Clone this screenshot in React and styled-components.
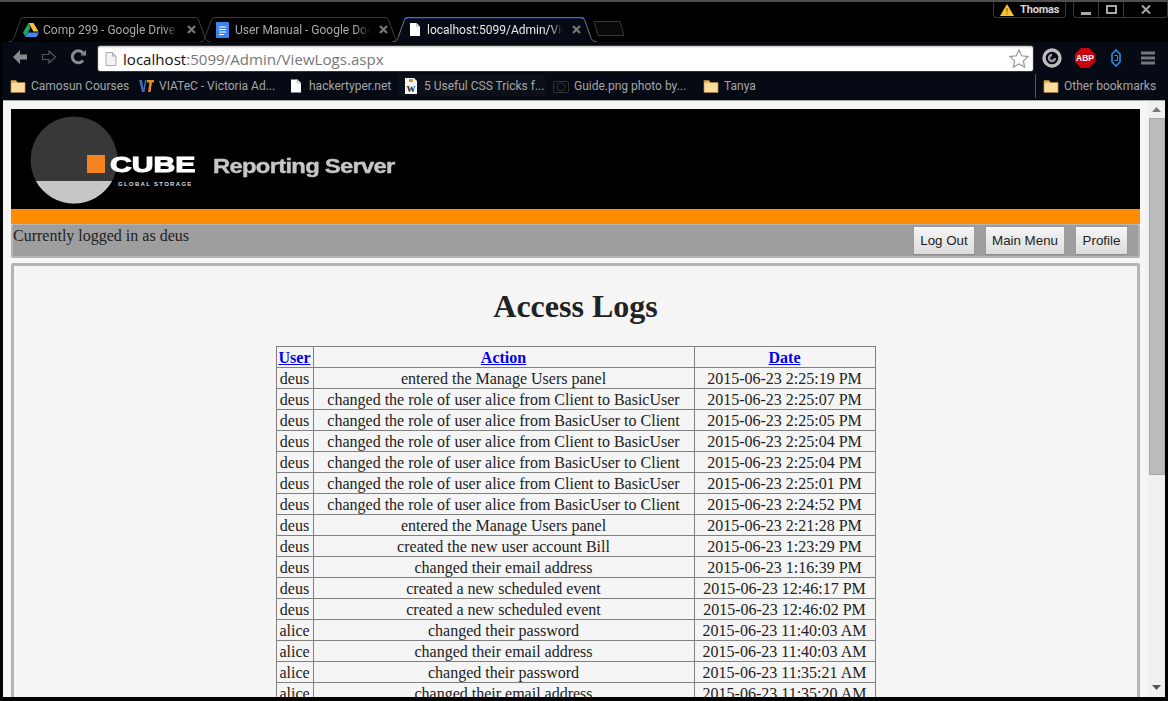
import React from "react";
import styled, { createGlobalStyle } from "styled-components";

const Global = createGlobalStyle`
  html, body { margin: 0; padding: 0; height: 100%; background: #000; overflow: hidden; }
  #root { height: 100%; }
`;

const UI = `Roboto, "Open Sans", sans-serif`;

const Window = styled.div`
  width: 1168px; height: 701px; background: #000; display: flex; flex-direction: column;
  border-top: 2px solid #4e4e4e; box-sizing: border-box; overflow: hidden;
`;
const TitleBar = styled.div`
  height: 40px; display: flex; justify-content: space-between; align-items: flex-start; flex: none;
`;
const TabStrip = styled.div`
  display: flex; align-items: flex-end; height: 40px; padding-left: 8px;
`;
const TabShell = styled.div`
  position: relative; width: ${p => p.$w}px; margin-right: ${p => p.$mr || 0}px; height: 25px; flex: none;
  display: flex; align-items: center; padding: 0 0 0 ${p => p.$pl}px; box-sizing: border-box;
  font: 12px ${UI}; color: ${p => p.$active ? "#e8e8e8" : "#a9a9a9"};
`;
const TabOutline = styled.svg`
  position: absolute; left: 0; top: 0;
`;
const TabLabel = styled.span`
  position: relative; margin-left: ${p => p.$ml}px; width: ${p => p.$w}px; flex: none; white-space: nowrap; overflow: hidden;
  -webkit-mask-image: linear-gradient(to right, #000 90%, transparent);
  mask-image: linear-gradient(to right, #000 90%, transparent);
`;
const TabClose = styled.svg`
  position: relative; margin-left: 9px; flex: none;
`;
const TabIcon = styled.svg`position: relative; flex: none;`;
const NewTab = styled.svg`flex: none; margin: 0 0 6px 5px;`;

const TitleRight = styled.div`
  display: flex; align-items: flex-start;
`;
const Profile = styled.div`
  height: 16px; width: 73px; border: 1px solid #3a3a3a; border-top: none; border-radius: 0 0 4px 4px;
  display: flex; align-items: center; gap: 6px; padding-left: 6px; box-sizing: border-box;
  font: bold 11px ${UI}; letter-spacing: -0.15px; color: #d8d8d8;
`;
const WinControls = styled.div`
  height: 16px; margin-left: 7px; border: 1px solid #3a3a3a; border-top: none; border-radius: 0 0 4px 4px;
  display: flex; box-sizing: border-box;
`;
const WinBtn = styled.div`
  width: ${p => p.$w}px; height: 100%; display: flex; align-items: center; justify-content: center;
  border-right: ${p => p.$last ? "none" : "1px solid #3a3a3a"}; box-sizing: border-box; color: #bbb;
`;

const Toolbar = styled.div`
  height: 30px; flex: none; background: #050a14; display: flex; align-items: center; padding: 0 0 0 12px;
  margin-left: 2px; border-radius: 3px 0 0 0; box-sizing: border-box;
`;
const NavIcons = styled.div`
  display: flex; align-items: center; gap: 13px; width: 85px; margin-left: -2px;
`;
const Omnibox = styled.div`
  width: 937px; height: 27px; background: #fff; border: 1px solid #30343c; outline: 1px solid #0a0a0a;
  border-radius: 3px; display: flex; align-items: center; padding: 0 4px 0 7px; box-sizing: border-box; margin-top: 3px;
  font: 15.1px "Open Sans", sans-serif; box-shadow: inset 0 1px 2px rgba(0,0,0,.25);
`;
const Host = styled.span`color: #111; margin-left: 6px;`;
const Path = styled.span`color: #777; flex: 1;`;
const Extensions = styled.div`
  display: flex; align-items: center; margin-left: 8px; gap: 13px; margin-top: 2px;
`;
const ExtIcon = styled.svg`
  flex: none; margin-left: ${p => p.$ml || 0}px; margin-right: ${p => p.$mr || 0}px;
`;

const Bookmarks = styled.div`
  height: 28px; flex: none; margin-left: 2px; background: #050a14; display: flex; align-items: center;
  padding: 0 0 1px 8px; box-sizing: border-box; font: 12px ${UI}; color: #a6a6a6;
`;
const Bookmark = styled.div`
  display: flex; align-items: center; gap: ${p => p.$gap || 5}px; width: ${p => p.$w}px; flex: none; white-space: nowrap;
`;
const HoveredBookmark = styled(Bookmark)`
  height: 21px; background: #0c1119; border-radius: 2px; padding-left: 6px; margin: 0 8px 0 -6px;
`;
const BookmarkDivider = styled.div`
  width: 1px; height: 24px; background: #555; margin-left: ${p => p.$ml}px; margin-right: 7px;
`;

const PageArea = styled.div`
  flex: 1; min-height: 0; margin: 0 3px 4px 3px; background: #f5f5f5; display: flex; border-top: 1px solid #aaa;
`;
const Viewport = styled.div`
  flex: 1; min-width: 0; overflow: hidden; padding: 8px 8px 0 8px; box-sizing: border-box;
  display: flex; flex-direction: column; font: 16px "Liberation Serif", serif; color: #222;
`;
const Scrollbar = styled.div`
  width: 17px; flex: none; background: #f0f0f0; display: flex; flex-direction: column; align-items: center;
`;
const ScrollArrow = styled.svg`flex: none; margin: 6px 0 ${p => p.$mb}px;`;
const ScrollThumb = styled.div`
  width: 16px; height: ${p => p.$h}px; background: #bcbcbc; border: 1px solid #a8a8a8; box-sizing: border-box; flex: none;
`;
const Spacer = styled.div`flex: 1;`;

const Banner = styled.div`
  height: 100px; background: #000; flex: none; display: flex; align-items: flex-start; padding-left: 19px;
`;
const Logo = styled.div`
  position: relative; width: 380px; height: 100px;
`;
const LogoArt = styled.svg`display: block; margin-top: 6px;`;
const CubeWord = styled.div`
  position: absolute; left: 80px; top: 44px; font: 900 22px/24px "Liberation Sans", sans-serif; color: #fff;
  -webkit-text-stroke: 1px #fff; transform: scaleX(1.37); transform-origin: left;
`;
const CubeTag = styled.div`
  position: absolute; left: 88px; top: 71px; font: bold 6px/8px "Liberation Sans", sans-serif; color: #ddd; letter-spacing: 1.3px; white-space: nowrap;
`;
const ServerWord = styled.div`
  position: absolute; left: 183px; top: 45px; font: bold 20px/24px "Liberation Sans", sans-serif; color: #c6c6c6;
  -webkit-text-stroke: 0.4px #c6c6c6; letter-spacing: -0.6px; transform: scaleX(1.19); transform-origin: left; white-space: nowrap;
`;
const OrangeBar = styled.div`height: 15px; background: #ff8c00; flex: none;`;
const UserBar = styled.div`
  height: 34px; flex: none; background: #9e9e9e; border: 2px solid #b4b4b4; border-top-width: 1px; border-radius: 2px; box-sizing: border-box;
  display: flex; justify-content: space-between; align-items: flex-start; padding-right: 11px;
`;
const LoggedIn = styled.span`line-height: 18px; margin-top: 2px;`;
const Buttons = styled.div`display: flex; gap: 12px; margin-top: 2px;`;
const Button = styled.button`
  height: 28px; width: ${p => p.$w}px; padding: 0; border: none; border-bottom: 1px solid #8d8d8d;
  background: linear-gradient(#f6f6f6, #dcdcdc); box-shadow: 0 0 1px #888; color: #222;
  font: 13.33px "Liberation Sans", sans-serif;
`;
const Panel = styled.div`
  margin-top: 5px; flex: 1; border: 3px solid #b4b4b4; border-bottom: none; border-radius: 3px 3px 0 0; box-sizing: border-box;
  background: #f5f5f5; display: flex; flex-direction: column; align-items: center; overflow: hidden;
`;
const Title = styled.h1`
  margin: 22px 0 21px; font: bold 32px/37px "Liberation Serif", serif; color: #222; flex: none;
`;
const Table = styled.table`
  border-collapse: collapse; width: 600px; table-layout: fixed; font: 16px/18px "Liberation Serif", serif; flex: none;
`;
const Th = styled.th`
  border: 1px solid #808080; padding: 2px 0 0; text-align: center; font-weight: bold; height: 18px;
  width: ${p => p.$w}px;
`;
const SortLink = styled.a`color: #0000ee; text-decoration: underline;`;
const Td = styled.td`
  border: 1px solid #808080; padding: 2px 0 0; text-align: center; height: 18px; white-space: nowrap;
`;

const Folder = () => (
  <svg width="16" height="14" viewBox="0 0 16 14">
    <path d="M1 1.5h5l1.5 2H15v10H1z" fill="#e2b96c" stroke="#a9823c" strokeWidth=".8" />
    <rect x="1.5" y="4" width="13" height="9" fill="#f8dca0" />
  </svg>
);
const PageIcon = ({ c = "#fff", s = "none", h = 14 }) => (
  <TabIcon width="12" height={h} viewBox="0 0 12 14">
    <path d="M1 .5h6.5L11 4v9.5H1z" fill={c} stroke={s} />
    <path d="M7.5.5V4H11" fill="none" stroke={s === "none" ? "#bbb" : s} />
  </TabIcon>
);

const rows = [
  ["deus", "entered the Manage Users panel", "2015-06-23 2:25:19 PM"],
  ["deus", "changed the role of user alice from Client to BasicUser", "2015-06-23 2:25:07 PM"],
  ["deus", "changed the role of user alice from BasicUser to Client", "2015-06-23 2:25:05 PM"],
  ["deus", "changed the role of user alice from Client to BasicUser", "2015-06-23 2:25:04 PM"],
  ["deus", "changed the role of user alice from BasicUser to Client", "2015-06-23 2:25:04 PM"],
  ["deus", "changed the role of user alice from Client to BasicUser", "2015-06-23 2:25:01 PM"],
  ["deus", "changed the role of user alice from BasicUser to Client", "2015-06-23 2:24:52 PM"],
  ["deus", "entered the Manage Users panel", "2015-06-23 2:21:28 PM"],
  ["deus", "created the new user account Bill", "2015-06-23 1:23:29 PM"],
  ["deus", "changed their email address", "2015-06-23 1:16:39 PM"],
  ["deus", "created a new scheduled event", "2015-06-23 12:46:17 PM"],
  ["deus", "created a new scheduled event", "2015-06-23 12:46:02 PM"],
  ["alice", "changed their password", "2015-06-23 11:40:03 AM"],
  ["alice", "changed their email address", "2015-06-23 11:40:03 AM"],
  ["alice", "changed their password", "2015-06-23 11:35:21 AM"],
  ["alice", "changed their email address", "2015-06-23 11:35:20 AM"],
];

const Tab = ({ w, mr, pl, active, icon, label, lw, lm }) => (
  <TabShell $w={w} $mr={mr} $pl={pl} $active={active}>
    <TabOutline width={w + 14} height="25" viewBox={`0 0 ${w + 14} 25`}>
      <path
        d={`M0 25 C5 25 6 21 7 18 L12 4 C13 1 14 .5 17 .5 L${w - 8} .5 C${w - 5} .5 ${w - 4} 1 ${w - 3} 4 L${w + 2} 18 C${w + 3} 21 ${w + 4} 25 ${w + 9} 25`}
        fill={active ? "#050a14" : "none"}
        stroke={active ? "#777" : "#3c3c3c"}
      />
      {active && <path d={`M13 2 C14 .8 15 .5 17 .5 L${w - 8} .5 C${w - 6} .5 ${w - 5} .8 ${w - 4} 2`} fill="none" stroke="#2f6fdc" strokeWidth="1.6" />}
    </TabOutline>
    {icon}
    <TabLabel $w={lw} $ml={lm}>{label}</TabLabel>
    <TabClose width="9" height="9" viewBox="0 0 9 9"><path d="M1 1l7 7M8 1l-7 7" stroke="#777" strokeWidth="2.2" /></TabClose>
  </TabShell>
);

export default function App() {
  return (
    <Window>
      <Global />
      <TitleBar>
        <TabStrip>
          <Tab w={194} mr={-3} pl={15} lw={135} lm={4} label="Comp 299 - Google Drive" icon={
            <TabIcon width="16" height="14" viewBox="0 0 16 14">
              <path d="M5.5 0h5l5 8.5h-5z" fill="#f6c230" />
              <path d="M5.5 0L0 9.5l2.5 4.5 5-9z" fill="#1da462" />
              <path d="M5 9.5h11L13.5 14H2.5z" fill="#4486f4" />
            </TabIcon>
          } />
          <Tab w={193} pl={17} lw={135} lm={6} label="User Manual - Google Docs" icon={
            <TabIcon width="13" height="16" viewBox="0 0 13 16">
              <rect width="13" height="16" rx="1" fill="#3f83ee" />
              <path d="M3 5h7M3 7.5h7M3 10h7M3 12.5h5" stroke="#fff" />
            </TabIcon>
          } />
          <Tab w={196} pl={17} lw={136} lm={6} active label="localhost:5099/Admin/ViewLogs.aspx" icon={<PageIcon h={15} />} />
          <NewTab width="32" height="15" viewBox="0 0 32 15">
            <path d="M1 .5H27L31 14.5H5z" fill="#080808" stroke="#3a3a3a" />
          </NewTab>
        </TabStrip>
        <TitleRight>
          <Profile>
            <svg width="14" height="12" viewBox="0 0 14 12"><path d="M7 0l7 12H0z" fill="#fcc22e" /><path d="M7 4v4M7 9v1.4" stroke="#7a5a00" /></svg>
            Thomas
          </Profile>
          <WinControls>
            <WinBtn $w={25}><svg width="10" height="10" viewBox="0 0 10 10"><rect y="7" width="10" height="3" fill="#a8a8a8" /></svg></WinBtn>
            <WinBtn $w={25}><svg width="11" height="9" viewBox="0 0 11 9"><rect x="1" y="1" width="9" height="7" fill="none" stroke="#a8a8a8" strokeWidth="2" /></svg></WinBtn>
            <WinBtn $w={43} $last><svg width="10" height="9" viewBox="0 0 10 9"><path d="M1 .5l8 8M9 .5l-8 8" stroke="#a8a8a8" strokeWidth="2" /></svg></WinBtn>
          </WinControls>
        </TitleRight>
      </TitleBar>

      <Toolbar>
        <NavIcons>
          <svg width="16" height="14" viewBox="0 0 16 14"><path d="M8 0L1 7l7 7V9.5h7v-5H8z" fill="#8a8a8a" /></svg>
          <svg width="16" height="14" viewBox="0 0 16 14"><path d="M8 1l6.5 6L8 13V9.5H1.5v-5H8z" fill="none" stroke="#555" strokeWidth="1.2" /></svg>
          <svg width="17" height="16" viewBox="0 0 17 16"><path d="M13 11.5A6 6 0 1 1 13 4" fill="none" stroke="#8a8a8a" strokeWidth="3" /><path d="M10.5 6.5H16V1z" fill="#8a8a8a" /></svg>
        </NavIcons>
        <Omnibox>
          <PageIcon c="#f4f4f4" s="#aaa" h={14} />
          <Host>localhost</Host>
          <Path>:5099/Admin/ViewLogs.aspx</Path>
          <svg width="20" height="19" viewBox="0 0 20 19"><path d="M10 1l2.7 5.8 6.3.8-4.6 4.3 1.2 6.2L10 15l-5.6 3.1 1.2-6.2L1 7.6l6.3-.8z" fill="#fff" stroke="#999" strokeWidth="1.2" /></svg>
        </Omnibox>
        <Extensions>
          <ExtIcon width="20" height="20" viewBox="0 0 20 20"><circle cx="10" cy="10" r="8" fill="none" stroke="#bdbdbd" strokeWidth="3.4" /><path d="M13 10a3 3 0 1 1-3-3" fill="none" stroke="#9a9a9a" strokeWidth="2.4" /></ExtIcon>
          <ExtIcon width="20" height="20" viewBox="0 0 20 20"><path d="M6 0h8l6 6v8l-6 6H6l-6-6V6z" fill="#c8050b" /><text x="10" y="13.2" textAnchor="middle" fontFamily="Liberation Sans" fontWeight="bold" fontSize="8.5" fill="#fff">ABP</text></ExtIcon>
          <ExtIcon $ml={3} $mr={3} width="10" height="18" viewBox="0 0 10 18"><path d="M5 1l4 4v8l-4 4-4-4V5z" fill="none" stroke="#2a8fe6" strokeWidth="1.6" /><path d="M3.5 6.5H6.5V11.5H3.5" fill="none" stroke="#2a8fe6" /></ExtIcon>
          <ExtIcon $ml={4} width="14" height="14" viewBox="0 0 14 14"><path d="M0 2h14M0 7h14M0 12h14" stroke="#777" strokeWidth="3" /></ExtIcon>
        </Extensions>
      </Toolbar>

      <Bookmarks>
        <Bookmark $w={129}><Folder /><span>Camosun Courses</span></Bookmark>
        <Bookmark $w={151}>
          <svg width="15" height="14" viewBox="0 0 15 14"><path d="M0 1h3l1.5 9L6 1h1.6L5.5 13H3z" fill="#3b6db8" /><path d="M8 1h7v2.4h-2L11.5 13H9l1.4-9.6H8z" fill="#ee8a1c" /></svg>
          <span>VIATeC - Victoria Ad...</span>
        </Bookmark>
        <Bookmark $w={114} $gap={7}><PageIcon /><span>hackertyper.net</span></Bookmark>
        <HoveredBookmark $w={141} $gap={6}>
          <svg width="14" height="16" viewBox="0 0 14 16"><path d="M1 0h9l3 3v13H1z" fill="#f4f4f4" /><rect x="5" y="1" width="4" height="3" fill="#f08a1c" /><text x="7" y="14" textAnchor="middle" fontFamily="Liberation Serif" fontWeight="bold" fontSize="9" fill="#123">W</text></svg>
          <span>5 Useful CSS Tricks f...</span>
        </HoveredBookmark>
        <Bookmark $w={150}>
          <svg width="16" height="14" viewBox="0 0 16 14"><rect x=".5" y="2.5" width="15" height="11" rx="1" fill="none" stroke="#333" /><circle cx="8" cy="8" r="4" fill="none" stroke="#333" /></svg>
          <span>Guide.png photo by...</span>
        </Bookmark>
        <Bookmark $w={60}><Folder /><span>Tanya</span></Bookmark>
        <BookmarkDivider $ml={272} />
        <Bookmark $w={120}><Folder /><span>Other bookmarks</span></Bookmark>
      </Bookmarks>

      <PageArea>
        <Viewport>
          <Banner>
            <Logo>
              <LogoArt width="110" height="90" viewBox="0 0 110 90">
                <circle cx="44" cy="45" r="43.5" fill="#383838" />
                <path d="M5.9 66 H82.1 A43.5 43.5 0 0 1 5.9 66z" fill="#c6c6c6" />
                <rect x="57" y="40" width="18" height="18" fill="#f58420" />
              </LogoArt>
              <CubeWord>CUBE</CubeWord>
              <CubeTag>GLOBAL STORAGE</CubeTag>
              <ServerWord>Reporting Server</ServerWord>
            </Logo>
          </Banner>
          <OrangeBar />
          <UserBar>
            <LoggedIn>Currently logged in as deus</LoggedIn>
            <Buttons>
              <Button $w={60}>Log Out</Button>
              <Button $w={78}>Main Menu</Button>
              <Button $w={51}>Profile</Button>
            </Buttons>
          </UserBar>
          <Panel>
            <Title>Access Logs</Title>
            <Table>
              <thead>
                <tr>
                  <Th $w={36}><SortLink href="#">User</SortLink></Th>
                  <Th $w={380}><SortLink href="#">Action</SortLink></Th>
                  <Th $w={180}><SortLink href="#">Date</SortLink></Th>
                </tr>
              </thead>
              <tbody>
                {rows.map((r, i) => (
                  <tr key={i}><Td>{r[0]}</Td><Td>{r[1]}</Td><Td>{r[2]}</Td></tr>
                ))}
              </tbody>
            </Table>
          </Panel>
        </Viewport>
        <Scrollbar>
          <ScrollArrow $mb={6} width="9" height="5" viewBox="0 0 9 5"><path d="M4.5 0L9 5H0z" fill="#777" /></ScrollArrow>
          <ScrollThumb $h={357} />
          <Spacer />
          <ScrollArrow $mb={7} width="9" height="5" viewBox="0 0 9 5"><path d="M0 0h9L4.5 5z" fill="#555" /></ScrollArrow>
        </Scrollbar>
      </PageArea>
    </Window>
  );
}
